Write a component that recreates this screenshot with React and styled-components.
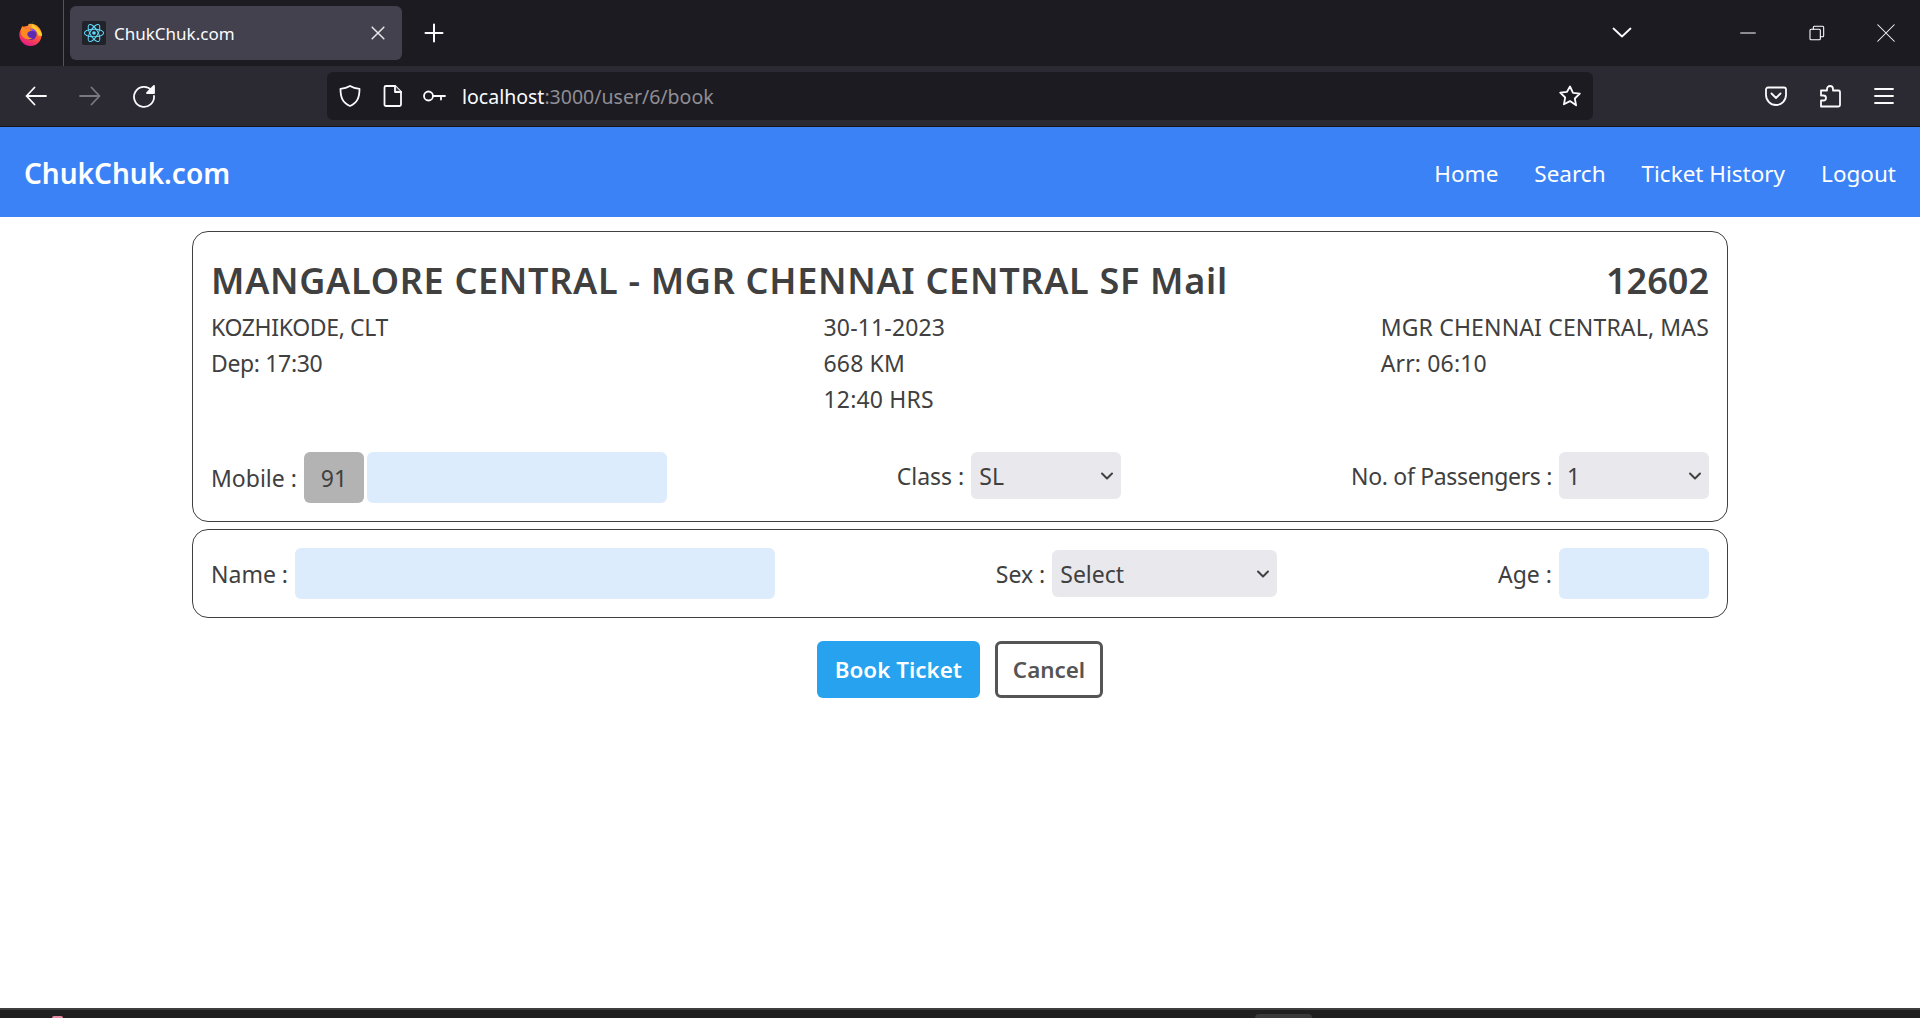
import React from "react";
import styled, { createGlobalStyle } from "styled-components";

const GlobalStyle = createGlobalStyle`
  html, body {
    margin: 0;
    height: 100%;
    overflow: hidden;
    background: #fff;
  }
  * {
    box-sizing: border-box;
  }
`;

const FONT = `"Noto Sans", "Open Sans", sans-serif`;
const CHEVRON =
  "url(\"data:image/svg+xml,%3Csvg xmlns='http://www.w3.org/2000/svg' width='14' height='10' viewBox='0 0 14 10' fill='none' stroke='%23404040' stroke-width='2' stroke-linecap='round' stroke-linejoin='round'%3E%3Cpath d='M2 2.500l5 5 5-5'/%3E%3C/svg%3E\")";

const Page = styled.div`
  display: flex;
  flex-direction: column;
  height: 100vh;
  font-family: ${FONT};
  color: #404040;
`;

const TabStrip = styled.div`
  display: flex;
  align-items: center;
  height: 66px;
  background: #1c1b22;
  flex-shrink: 0;
`;

const AppMenu = styled.div`
  display: flex;
  align-items: center;
  justify-content: center;
  width: 64px;
  height: 66px;
  padding-right: 2px;
  border-right: 1px solid #55545c;
`;

const Tab = styled.div`
  display: flex;
  align-items: center;
  width: 332px;
  height: 54px;
  margin-left: 6px;
  padding: 0 14px 0 12px;
  border-radius: 6px;
  background: #42414d;
  color: #fbfbfe;
  font-size: 17px;
`;

const Favicon = styled.span`
  display: flex;
  align-items: center;
  justify-content: center;
  width: 24px;
  height: 24px;
  margin-right: 8px;
  border-radius: 2px;
  background: #20232a;
`;

const TabTitle = styled.span`
  flex: 1;
`;

const NewTab = styled.div`
  display: flex;
  margin-left: 20px;
`;

const WindowControls = styled.div`
  display: flex;
  align-items: center;
  margin-left: auto;
`;

const TabsChevron = styled.div`
  display: flex;
  justify-content: center;
  width: 40px;
  margin-right: 71px;
`;

const WinButton = styled.div`
  display: flex;
  align-items: center;
  justify-content: center;
  width: 69px;
  height: 66px;
`;

const Toolbar = styled.div`
  display: flex;
  align-items: center;
  height: 61px;
  padding: 0 9px;
  background: #2b2a33;
  border-bottom: 1px solid #15141a;
  flex-shrink: 0;
`;

const ToolButton = styled.div`
  display: flex;
  align-items: center;
  justify-content: center;
  width: 54px;
  height: 48px;
  color: ${(p) => (p.$dim ? "#7a7980" : "#fbfbfe")};
`;

const UrlBar = styled.div`
  display: flex;
  align-items: center;
  width: 1266px;
  height: 48px;
  margin: 0 auto 0 156px;
  padding: 0 11px;
  gap: 18px;
  border-radius: 6px;
  background: #1c1b22;
`;

const UrlText = styled.div`
  margin-left: -2px;
  font-size: 19.5px;
  color: #fbfbfe;
  span {
    color: #8f8e94;
  }
`;

const Star = styled.div`
  display: flex;
  margin-left: auto;
`;

const Nav = styled.nav`
  display: flex;
  align-items: center;
  justify-content: space-between;
  height: 90px;
  padding: 2px 24px 0;
  background: #3b82f6;
  color: #fff;
  flex-shrink: 0;
`;

const Brand = styled.div`
  font-size: 28px;
  font-weight: 600;
`;

const NavLinks = styled.div`
  display: flex;
  gap: 36px;
  font-size: 22.5px;
`;

const Main = styled.main`
  flex: 1;
  display: flex;
  flex-direction: column;
  align-items: center;
  padding-top: 14px;
`;

const Card = styled.section`
  width: 1536px;
  margin-bottom: 7px;
  padding: ${(p) => p.$padding};
  border: 1px solid #404040;
  border-radius: 16px;
`;

const TitleRow = styled.div`
  display: flex;
  justify-content: space-between;
  margin-bottom: 1px;
  font-size: 36px;
  font-weight: 600;
  line-height: 55px;
`;

const TrainName = styled.span`
  letter-spacing: 0.7px;
`;

const InfoRow = styled.div`
  display: flex;
  justify-content: space-between;
  margin-bottom: 35px;
  font-size: 23px;
  line-height: 36px;
`;

const InfoColumn = styled.div`
  letter-spacing: ${(p) => p.$spacing || "0"};
`;

const FormRow = styled.div`
  display: flex;
  justify-content: space-between;
  align-items: ${(p) => p.$align};
  font-size: 23px;
`;

const Field = styled.label`
  display: flex;
  align-items: center;
  gap: 7px;
`;

const FieldName = styled.span`
  letter-spacing: ${(p) => (p.$tight ? "-0.33px" : "0")};
`;

const Prefix = styled.div`
  display: flex;
  align-items: center;
  justify-content: center;
  width: 60px;
  height: 51px;
  margin-right: -4px;
  border-radius: 6px;
  background: #b3b3b3;
`;

const TextInput = styled.input`
  width: ${(p) => p.$width}px;
  height: 51px;
  border: none;
  border-radius: 6px;
  outline: none;
  background: #dcecfc;
`;

const Select = styled.select`
  appearance: none;
  width: ${(p) => p.$width}px;
  height: 47px;
  padding: 0 8px;
  border: none;
  border-radius: 6px;
  background: #e9e9ed ${CHEVRON} no-repeat right 7px center;
  color: #404040;
  font-family: ${FONT};
  font-size: 23px;
`;

const Actions = styled.div`
  display: flex;
  gap: 15px;
  margin-top: 16px;
`;

const Button = styled.button`
  height: 57px;
  padding: 0 ${(p) => (p.$outline ? "15px" : "18px")};
  border: ${(p) => (p.$outline ? "3px solid #555" : "none")};
  border-radius: 6px;
  background: ${(p) => (p.$outline ? "#fff" : "#27a2ee")};
  color: ${(p) => (p.$outline ? "#555" : "#fff")};
  font-family: ${FONT};
  font-size: 22.4px;
  font-weight: 600;
`;

const Taskbar = styled.div`
  display: flex;
  align-items: flex-end;
  height: 10px;
  border-top: 2px solid #3d3d3d;
  background: #202020;
  flex-shrink: 0;
`;

const PinnedApp = styled.div`
  width: 11px;
  height: 2px;
  margin-left: 52px;
  border-radius: 4px 4px 0 0;
  background: #e58aa0;
`;

const RunningApp = styled.div`
  width: 57px;
  height: 4px;
  margin-left: 1192px;
  border-radius: 4px 4px 0 0;
  background: #3a3a3a;
`;

const Glyph = ({ size = 24, children, width = 1.8, color = "currentColor" }) => (
  <svg
    width={size}
    height={size}
    viewBox="0 0 24 24"
    fill="none"
    stroke={color}
    strokeWidth={width}
    strokeLinecap="round"
    strokeLinejoin="round"
  >
    {children}
  </svg>
);

const FirefoxLogo = () => (
  <svg width="25" height="25" viewBox="0 0 24 24">
    <defs>
      <linearGradient id="ff-body" x1="0.75" y1="0.05" x2="0.3" y2="1">
        <stop offset="0" stopColor="#ffb02e" />
        <stop offset="0.45" stopColor="#ff5a36" />
        <stop offset="1" stopColor="#e3178c" />
      </linearGradient>
    </defs>
    <circle cx="12" cy="13.300" r="10.700" fill="url(#ff-body)" />
    <path d="M0 0h11.500L9.500 4.500 5 5.500 2.500 3.500 0 8z" fill="#1c1b22" />
    <path d="M14.700 0c-1.500 3 .3 4.800 4.300 7.200 3 2 4.300 4.500 4 7.300l-3.500-.5C18.500 9 15 7 12.300 6.300 14 4.500 14.300 2.200 14.700 0z" fill="#ffcb2e" />
    <circle cx="12.500" cy="12.800" r="5.400" fill="#5b2bb5" />
    <path d="M12 7.500c2.500-.5 5 1.200 5.700 3.800-1.500-1.500-3.500-2.200-5.200-2z" fill="#8a4ff0" />
    <path d="M4.500 4.500c.5 2 2 3 3.500 3.200 2.200-.3 4.500 0 5.500 1.300-2.500.5-4.200 1.500-4.500 3-.3 2.500 2 4.500 5 4.300-3 2.500-9 1.500-11-3.500C2.300 9.500 3 6.500 4.500 4.500z" fill="#ff8a1f" />
  </svg>
);

const ReactLogo = () => (
  <svg width="22" height="22" viewBox="0 0 24 24" fill="none" stroke="#61dafb" strokeWidth="1.1">
    <circle cx="12" cy="12" r="2" fill="#61dafb" stroke="none" />
    <ellipse cx="12" cy="12" rx="10.500" ry="4.200" />
    <ellipse cx="12" cy="12" rx="10.500" ry="4.200" transform="rotate(60 12 12)" />
    <ellipse cx="12" cy="12" rx="10.500" ry="4.200" transform="rotate(120 12 12)" />
  </svg>
);

export default function App() {
  return (
    <Page>
      <GlobalStyle />
      <TabStrip>
        <AppMenu>
          <FirefoxLogo />
        </AppMenu>
        <Tab>
          <Favicon>
            <ReactLogo />
          </Favicon>
          <TabTitle>ChukChuk.com</TabTitle>
          <Glyph size={20} color="#e8e8ea">
            <path d="M5 5l14 14M19 5L5 19" />
          </Glyph>
        </Tab>
        <NewTab>
          <Glyph size={24} color="#fbfbfe" width={2}>
            <path d="M12 3.500v17M3.500 12h17" />
          </Glyph>
        </NewTab>
        <WindowControls>
          <TabsChevron>
            <Glyph size={24} color="#fbfbfe" width={1.8}>
              <path d="M3.500 7.500L12 15.500l8.500-8" />
            </Glyph>
          </TabsChevron>
          <WinButton>
            <Glyph size={16} color="#fff" width={1.5}>
              <path d="M1 12h22" />
            </Glyph>
          </WinButton>
          <WinButton>
            <Glyph size={16} color="#fff" width={1.6}>
              <rect x="1.500" y="6.500" width="15.500" height="15.500" rx="1.500" />
              <path d="M6.500 6.500V3.500a1.500 1.500 0 0 1 1.500-1.500h12.500a1.500 1.500 0 0 1 1.500 1.500V16a1.500 1.500 0 0 1-1.500 1.500H17" />
            </Glyph>
          </WinButton>
          <WinButton>
            <Glyph size={18} color="#fff" width={1.4}>
              <path d="M1 1l22 22M23 1L1 23" />
            </Glyph>
          </WinButton>
        </WindowControls>
      </TabStrip>
      <Toolbar>
        <ToolButton>
          <Glyph>
            <path d="M22 12H2.500M10.500 3.500L2.500 12l8 8.500" />
          </Glyph>
        </ToolButton>
        <ToolButton $dim>
          <Glyph>
            <path d="M2 12h19.500M13.500 3.500l8 8.500-8 8.500" />
          </Glyph>
        </ToolButton>
        <ToolButton>
          <Glyph>
            <path d="M19.500 6.200A10 10 0 1 0 22 12" />
            <path d="M22 2v7h-7z" fill="currentColor" />
          </Glyph>
        </ToolButton>
        <UrlBar>
          <Glyph color="#fbfbfe">
            <path d="M12 2c3 1.800 6 2.500 9.500 2.800 0 8.500-2 14-9.500 17.200C4.500 18.800 2.500 13.300 2.500 4.800 6 4.500 9 3.800 12 2z" />
          </Glyph>
          <Glyph color="#fbfbfe">
            <path d="M4.500 3.500A1.500 1.500 0 0 1 6 2h9l6 6v12.500a1.500 1.500 0 0 1-1.500 1.500H6a1.500 1.500 0 0 1-1.500-1.500z" />
            <path d="M15 2v6h6" fill="currentColor" />
          </Glyph>
          <Glyph color="#fbfbfe">
            <circle cx="6.500" cy="12" r="4.500" />
            <path d="M11 12h12M19 12v3.500" />
          </Glyph>
          <UrlText>
            localhost<span>:3000/user/6/book</span>
          </UrlText>
          <Star>
            <Glyph color="#fbfbfe">
              <path d="M12 2.500l3 6.300 6.800.9-5 4.800 1.300 6.800L12 17.100l-6.100 3.200 1.300-6.800-5-4.800 6.800-.9z" />
            </Glyph>
          </Star>
        </UrlBar>
        <ToolButton>
          <Glyph>
            <path d="M2 5.500A2 2 0 0 1 4 3.500h16a2 2 0 0 1 2 2V11a10 10 0 0 1-20 0z" />
            <path d="M7.500 9.500l4.500 4.500 4.500-4.500" />
          </Glyph>
        </ToolButton>
        <ToolButton>
          <Glyph>
            <path d="M3 22.500v-6h2.500a2.500 2.500 0 0 0 0-5H3v-5h6V5a3 3 0 0 1 6 0v1.500h5.500a1.500 1.500 0 0 1 1.500 1.500v13a1.500 1.500 0 0 1-1.500 1.500z" />
          </Glyph>
        </ToolButton>
        <ToolButton>
          <Glyph>
            <path d="M3 5h18M3 12h18M3 19h18" />
          </Glyph>
        </ToolButton>
      </Toolbar>
      <Nav>
        <Brand>ChukChuk.com</Brand>
        <NavLinks>
          <span>Home</span>
          <span>Search</span>
          <span>Ticket History</span>
          <span>Logout</span>
        </NavLinks>
      </Nav>
      <Main>
        <Card $padding="21px 18px 18px">
          <TitleRow>
            <TrainName>MANGALORE CENTRAL - MGR CHENNAI CENTRAL SF Mail</TrainName>
            <span>12602</span>
          </TitleRow>
          <InfoRow>
            <InfoColumn $spacing="-0.35px">
              <div>KOZHIKODE, CLT</div>
              <div>Dep: 17:30</div>
            </InfoColumn>
            <InfoColumn $spacing="0.15px">
              <div>30-11-2023</div>
              <div>668 KM</div>
              <div>12:40 HRS</div>
            </InfoColumn>
            <InfoColumn $spacing="0.15px">
              <div>MGR CHENNAI CENTRAL, MAS</div>
              <div>Arr: 06:10</div>
            </InfoColumn>
          </InfoRow>
          <FormRow $align="flex-start">
            <Field>
              <FieldName>Mobile :</FieldName>
              <Prefix>91</Prefix>
              <TextInput $width={300} />
            </Field>
            <Field>
              <FieldName>Class :</FieldName>
              <Select $width={150} defaultValue="SL">
                <option>SL</option>
                <option>3A</option>
                <option>2A</option>
                <option>1A</option>
              </Select>
            </Field>
            <Field>
              <FieldName $tight>No. of Passengers :</FieldName>
              <Select $width={150} defaultValue="1">
                <option>1</option>
                <option>2</option>
                <option>3</option>
                <option>4</option>
              </Select>
            </Field>
          </FormRow>
        </Card>
        <Card $padding="18px 18px 18px">
          <FormRow $align="center">
            <Field>
              <FieldName>Name :</FieldName>
              <TextInput $width={480} />
            </Field>
            <Field>
              <FieldName>Sex :</FieldName>
              <Select $width={225} defaultValue="Select">
                <option>Select</option>
                <option>Male</option>
                <option>Female</option>
              </Select>
            </Field>
            <Field>
              <FieldName>Age :</FieldName>
              <TextInput $width={150} />
            </Field>
          </FormRow>
        </Card>
        <Actions>
          <Button>Book Ticket</Button>
          <Button $outline>Cancel</Button>
        </Actions>
      </Main>
      <Taskbar>
        <PinnedApp />
        <RunningApp />
      </Taskbar>
    </Page>
  );
}
